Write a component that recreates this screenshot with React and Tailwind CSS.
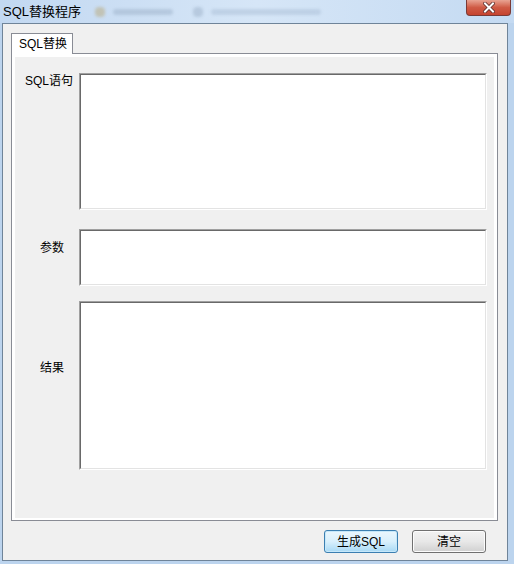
import React from 'react'

const FONT = { fontFamily: '"Liberation Sans", "Noto Sans CJK SC", sans-serif' }

// sunken 3D textbox border, like the WinForms Fixed3D style
function TextBox({ h }) {
  return (
    <div className={`w-[408px] ${h} border border-t-[#a0a0a0] border-l-[#a0a0a0] border-r-white border-b-white`}>
      <div className="w-full h-full bg-white border border-t-[#696969] border-l-[#696969] border-r-[#e3e3e3] border-b-[#e3e3e3]" />
    </div>
  )
}

function Row({ label, labelPad, labelTop, h, mt }) {
  return (
    <div className={`flex ${mt}`}>
      <div className={`w-[64px] shrink-0 text-[12px] leading-[14px] text-black ${labelPad} ${labelTop}`}>{label}</div>
      <TextBox h={h} />
    </div>
  )
}

export default function App() {
  return (
    <div className="w-[514px] h-[564px] overflow-hidden bg-[#bcd4ee] flex flex-col" style={FONT}>
      {/* title bar */}
      <div className="relative h-[23px] shrink-0 flex items-center pl-[3px] bg-gradient-to-r from-[#c2d8f1] via-[#d6e6f7] to-[#c4daf2]">
        <span className="text-[13px] text-black leading-none">SQL替换程序</span>
        <div className="ml-[14px] flex items-center gap-[8px] opacity-40 blur-[1.5px]">
          <div className="w-[10px] h-[10px] bg-[#b59b5a] rounded-sm" />
          <div className="w-[60px] h-[6px] bg-[#8fa4bd] rounded" />
          <div className="ml-[12px] w-[10px] h-[10px] bg-[#8fa4bd] rounded-sm" />
          <div className="w-[110px] h-[6px] bg-[#9fb4cd] rounded" />
        </div>
        <div className="absolute right-[3px] top-0 w-[45px] h-[16px] rounded-b-[4px] border border-t-0 border-[#7a3a36] bg-gradient-to-b from-[#e8a393] via-[#cf5a45] to-[#c5432f] flex items-center justify-center">
          <svg width="12" height="11" viewBox="0 0 12 11">
            <path d="M2 1.5 L10 9.5 M10 1.5 L2 9.5" stroke="#5a2a28" strokeWidth="3.6" strokeLinecap="square" />
            <path d="M2 1.5 L10 9.5 M10 1.5 L2 9.5" stroke="#ffffff" strokeWidth="2" strokeLinecap="square" />
          </svg>
        </div>
      </div>

      {/* client area */}
      <div className="ml-[2px] w-[506px] h-[538px] border border-[#6f8499] bg-[#f0f0f0] flex flex-col">
        {/* tab header */}
        <div className="pl-[8px] pt-[9px] flex">
          <div className="relative z-10 -mb-px w-[62px] h-[21px] bg-white border border-b-0 border-[#898c95] pl-[7px] pt-[3px] text-[12px] leading-[14px] text-black">
            SQL替换
          </div>
        </div>

        {/* tab page */}
        <div className="ml-[8px] w-[487px] h-[468px] border border-[#898c95] bg-white p-[3px] pb-[2px]">
          <div className="w-full h-full bg-[#f0f0f0] pt-[16px]">
            <Row label="SQL语句" labelPad="pl-[10px]" labelTop="pt-[1px]" h="h-[137px]" mt="mt-0" />
            <Row label="参数" labelPad="pl-[25px]" labelTop="pt-[12px]" h="h-[57px]" mt="mt-[19px]" />
            <Row label="结果" labelPad="pl-[25px]" labelTop="pt-[60px]" h="h-[169px]" mt="mt-[15px]" />
          </div>
        </div>

        {/* buttons */}
        <div className="mt-[9px] pr-[21px] flex justify-end gap-[14px]">
          <button className="w-[74px] h-[23px] rounded-[3px] border border-[#3c7fb1] bg-gradient-to-b from-[#eaf6fd] via-[#d9f0fc] to-[#a7d9f5] shadow-[inset_0_0_0_1px_#c6e8fa] text-[12px] text-black leading-none">
            生成SQL
          </button>
          <button className="w-[74px] h-[23px] rounded-[3px] border border-[#707070] bg-gradient-to-b from-[#f2f2f2] via-[#e8e8e8] to-[#d0d0d0] shadow-[inset_0_0_0_1px_#fcfcfc] text-[12px] text-black leading-none">
            清空
          </button>
        </div>
      </div>
    </div>
  )
}
